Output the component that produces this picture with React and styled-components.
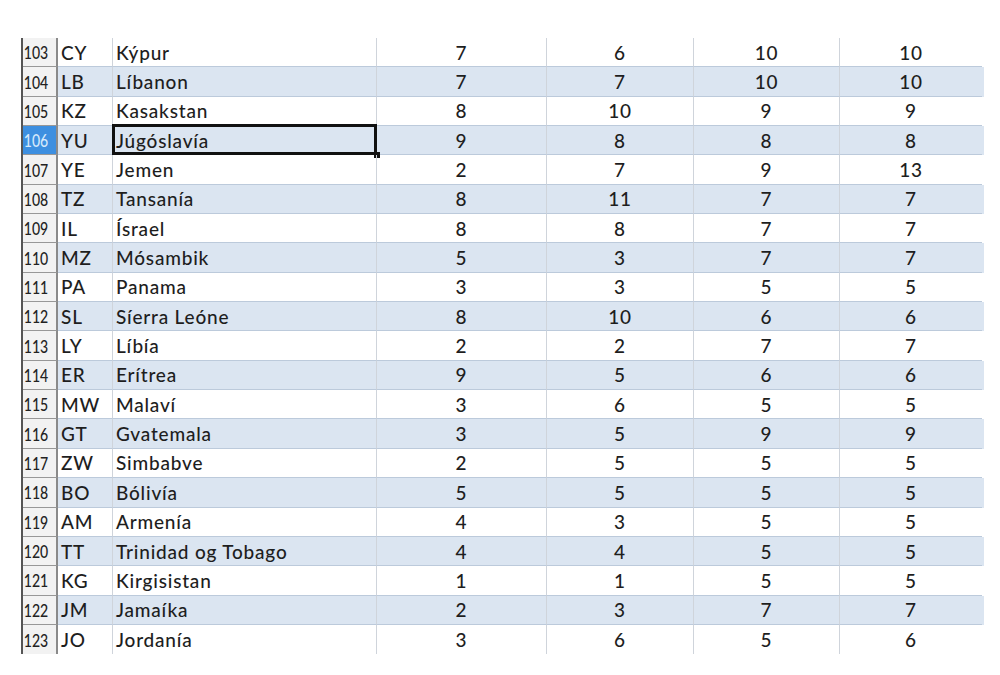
import React from 'react';
import styled, { createGlobalStyle } from 'styled-components';

const rows = [
  [103, 'CY', 'Kýpur', 7, 6, 10, 10],
  [104, 'LB', 'Líbanon', 7, 7, 10, 10],
  [105, 'KZ', 'Kasakstan', 8, 10, 9, 9],
  [106, 'YU', 'Júgóslavía', 9, 8, 8, 8],
  [107, 'YE', 'Jemen', 2, 7, 9, 13],
  [108, 'TZ', 'Tansanía', 8, 11, 7, 7],
  [109, 'IL', 'Ísrael', 8, 8, 7, 7],
  [110, 'MZ', 'Mósambik', 5, 3, 7, 7],
  [111, 'PA', 'Panama', 3, 3, 5, 5],
  [112, 'SL', 'Síerra Leóne', 8, 10, 6, 6],
  [113, 'LY', 'Líbía', 2, 2, 7, 7],
  [114, 'ER', 'Erítrea', 9, 5, 6, 6],
  [115, 'MW', 'Malaví', 3, 6, 5, 5],
  [116, 'GT', 'Gvatemala', 3, 5, 9, 9],
  [117, 'ZW', 'Simbabve', 2, 5, 5, 5],
  [118, 'BO', 'Bólivía', 5, 5, 5, 5],
  [119, 'AM', 'Armenía', 4, 3, 5, 5],
  [120, 'TT', 'Trinidad og Tobago', 4, 4, 5, 5],
  [121, 'KG', 'Kirgisistan', 1, 1, 5, 5],
  [122, 'JM', 'Jamaíka', 2, 3, 7, 7],
  [123, 'JO', 'Jordanía', 3, 6, 5, 6],
];

const SELECTED = 106;

const App = () => {
  return (
    <>
      <GlobalStyle />
      <SPage>
        <SSheet>
          {rows.map(([num, code, name, a, b, c, d], i) => {
            const banded = num % 2 === 0;
            const active = num === SELECTED;
            const last = i === rows.length - 1;
            return (
              <SRow key={num} $banded={banded} $last={last}>
                <SRowHead $active={active}>
                  <span>{num}</span>
                </SRowHead>
                <SCell>{code}</SCell>
                <SCell $selected={active}>{name}</SCell>
                <SNum>{a}</SNum>
                <SNum>{b}</SNum>
                <SNum>{c}</SNum>
                <SNum $end>{d}</SNum>
              </SRow>
            );
          })}
        </SSheet>
      </SPage>
    </>
  );
};

export default App;

const GlobalStyle = createGlobalStyle`
  body {
    margin: 0;
    background: #ffffff;
    font-family: Lato, 'Open Sans', sans-serif;
  }
`;

const SPage = styled.div`
  width: 1000px;
  height: 675px;
  padding: 38px 0 0 21px;
  box-sizing: border-box;
  background: #ffffff;
`;

const SSheet = styled.div`
  width: 961px;
  display: flex;
  flex-direction: column;
  border-left: 2px solid #555555;
`;

const SRow = styled.div`
  display: grid;
  grid-template-columns: 35px 55px 264px 170px 147px 146px 142px;
  height: 29.35px;
  background: ${({ $banded }) => ($banded ? '#dbe5f1' : '#ffffff')};
  color: #1e1e1e;
  font-size: 19px;
  font-weight: 500;
  letter-spacing: 0.8px;

  > * {
    border-bottom: ${({ $last }) => ($last ? 'none' : '1px solid #bccadb')};
  }
`;

const SRowHead = styled.div`
  display: flex;
  align-items: center;
  overflow: hidden;
  background: ${({ $active }) => ($active ? '#3d8fe0' : '#f2f2f2')};
  color: ${({ $active }) => ($active ? '#d6e9fb' : '#222222')};
  border-right: 2px solid #8a8a8a;
  && {
    border-bottom-color: #979797;
  }

  > span {
    display: inline-block;
    font-size: 18px;
    letter-spacing: 0;
    transform: scaleX(0.78);
    transform-origin: left center;
    padding-left: 1px;
  }
`;

const SCell = styled.div`
  position: relative;
  display: flex;
  align-items: center;
  padding-left: 3px;
  border-right: 1px solid #cfd4db;
  white-space: nowrap;

  ${({ $selected }) =>
    $selected &&
    `
    &::before {
      content: '';
      position: absolute;
      left: -1px;
      top: -2px;
      right: -1px;
      bottom: -1px;
      border: 3px solid #111;
    }
    &::after {
      content: '';
      position: absolute;
      right: -4px;
      bottom: -4px;
      width: 6px;
      height: 6px;
      background: #111;
    }
  `}
`;

const SNum = styled.div`
  display: flex;
  align-items: center;
  justify-content: center;
  border-right: ${({ $end }) => ($end ? 'none' : '1px solid #cfd4db')};
`;
